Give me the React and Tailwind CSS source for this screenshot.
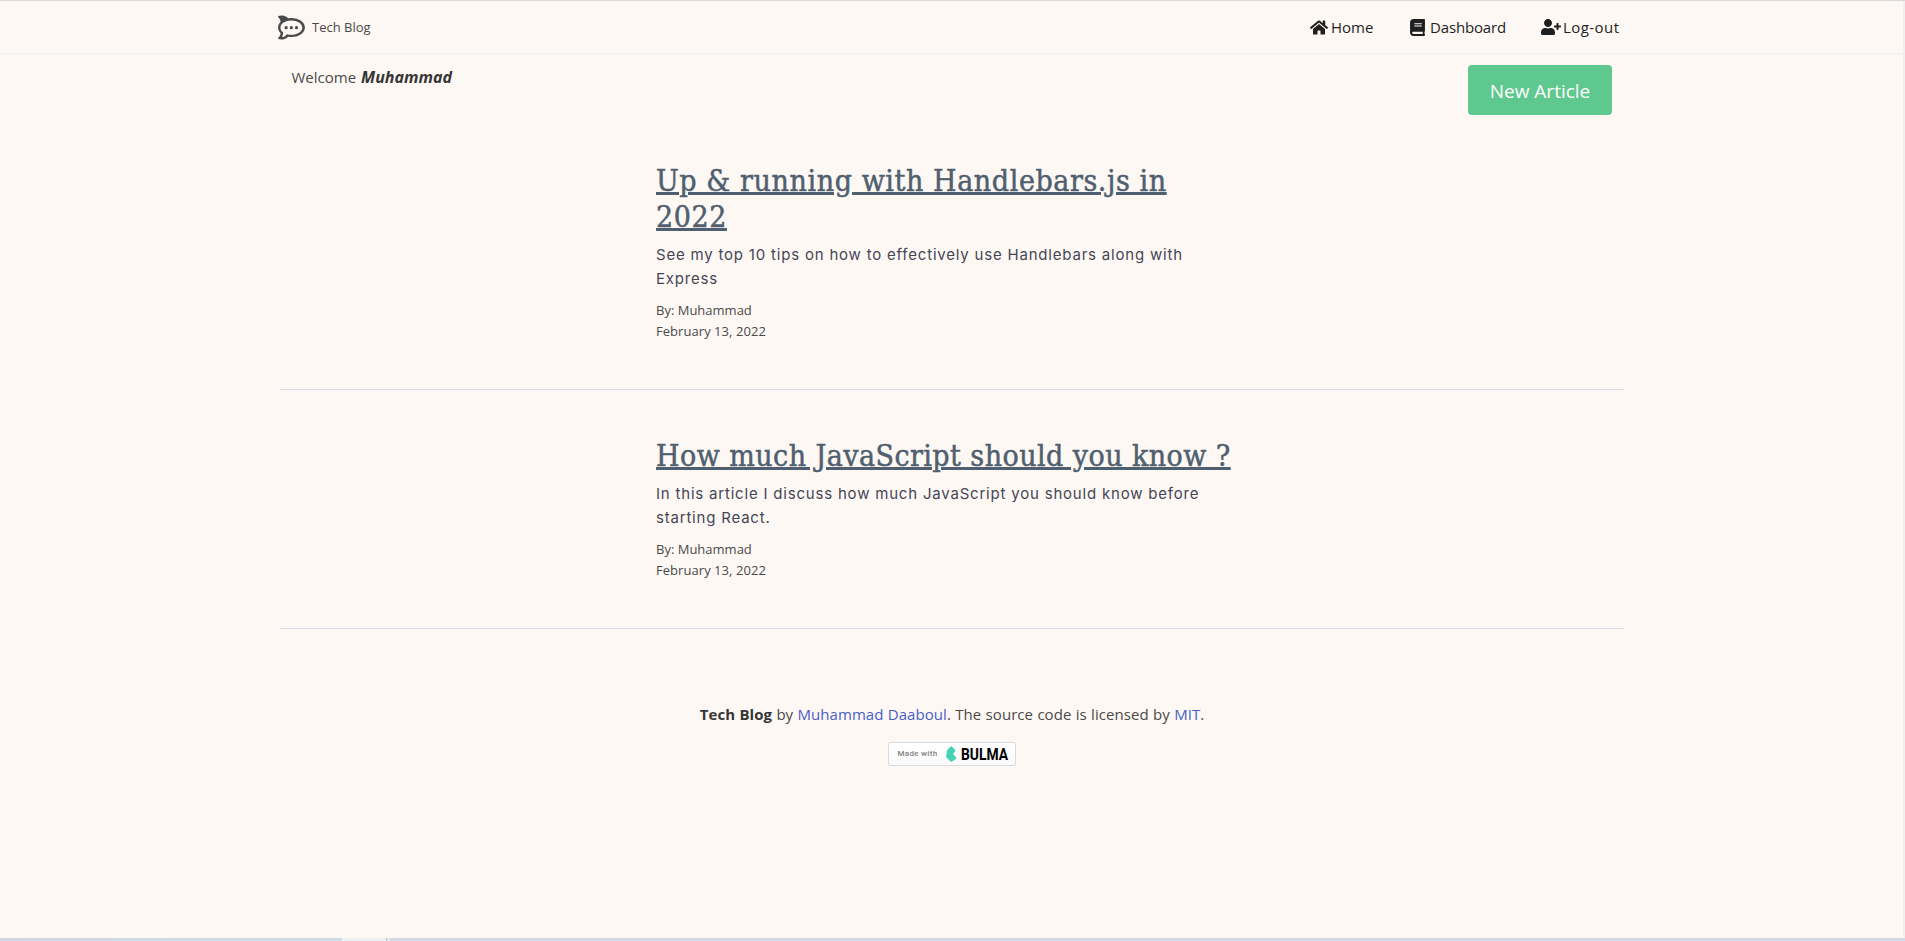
import React from "react";
import { FaRocketchat, FaHome, FaBook, FaUserPlus } from "react-icons/fa";

const articles = [
  {
    title: ["Up & running with Handlebars.js in", "2022"],
    titleClass: "tracking-[0.58px]",
    summary: ["See my top 10 tips on how to effectively use Handlebars along with", "Express"],
    author: "Muhammad",
    date: "February 13, 2022",
  },
  {
    title: ["How much JavaScript should you know ?"],
    titleClass: "tracking-[0.44px]",
    summary: ["In this article I discuss how much JavaScript you should know before", "starting React."],
    author: "Muhammad",
    date: "February 13, 2022",
  },
];

function Navbar() {
  return (
    <nav className="flex h-[54px] shrink-0 justify-between border-b-2 border-[#f5f5f5] pr-[282px] pl-[278px]">
      <a className="flex items-center text-[13px] text-[#4a4a4a]">
        <FaRocketchat className="mr-[7px] size-[27px]" />
        <span className="mt-[2px]">Tech Blog</span>
      </a>
      <div className="flex items-center text-[15px] text-[#1f1f1f]">
        <a className="flex w-[100px] items-center">
          <FaHome className="mr-[3px] h-[17px] w-[18px]" />
          <span>Home</span>
        </a>
        <a className="flex w-[131px] items-center">
          <FaBook className="mr-[5px] h-[17px] w-[15px]" />
          <span className="tracking-[-0.15px]">Dashboard</span>
        </a>
        <a className="flex w-[80px] items-center">
          <FaUserPlus className="mr-[2px] h-[16px] w-[20px]" />
          <span className="tracking-[0.45px]">Log-out</span>
        </a>
      </div>
    </nav>
  );
}

function Article({ title, titleClass, summary, author, date }) {
  return (
    <article className="border-b border-[#d6daea] pt-12 pb-[47px] pl-[376px]">
      <h2
        className={
          "font-['DejaVu_Serif_Condensed','DejaVu_Serif',serif] text-[30px] leading-[36px] font-normal text-[#4f5f6f] [font-stretch:condensed] [-webkit-text-stroke:0.5px_#4f5f6f] " +
          titleClass
        }
      >
        {title.map((line) => (
          <span key={line} className="block underline decoration-[3px] underline-offset-[1px]">
            {line}
          </span>
        ))}
      </h2>
      <p className="mt-2 font-['Inter',sans-serif] text-[15px] leading-6 tracking-[0.8px] text-[#454654]">
        {summary.map((line) => (
          <span key={line} className="block whitespace-nowrap">
            {line}
          </span>
        ))}
      </p>
      <div className="mt-[9px] text-[13px] leading-[21px] text-[#4a4a4a]">
        <p>By: {author}</p>
        <p className="tracking-[0.05px]">{date}</p>
      </div>
    </article>
  );
}

function BulmaBadge() {
  return (
    <a className="flex h-6 w-32 items-center rounded-[2px] border border-[#dbdbdb] bg-linear-to-b from-white to-[#fafafa] pl-[9px]">
      <span className="w-[48px] font-['Roboto',sans-serif] text-[8px] leading-none font-medium tracking-[0.3px] whitespace-nowrap text-[#808080]">
        Made with
      </span>
      <svg viewBox="0 0 10 16" className="h-4 w-[10px] shrink-0" fill="#44d3b5">
        <path d="M0 11 1 4.5 5 0 9 3.5 9 5.5 7 8 10 11 10 13 5 16Z" />
      </svg>
      <svg viewBox="0 0 47 16" className="ml-[5px] h-4 w-[47px] shrink-0 overflow-visible">
        <text
          x="0"
          y="13.7"
          textLength="47"
          lengthAdjust="spacingAndGlyphs"
          className="fill-black font-['Roboto',sans-serif] text-[16px] font-bold"
        >
          BULMA
        </text>
      </svg>
    </a>
  );
}

export default function App() {
  return (
    <div className="flex h-[941px] w-full flex-col overflow-hidden bg-[#fef8f4] font-['Open_Sans',sans-serif]">
      <div className="h-px shrink-0 bg-[#d8dadc]" />
      <div className="flex min-h-0 grow flex-col border-r-2 border-[#f0f0f1]">
        <Navbar />
        <main className="flex flex-col pr-[279px] pl-[280px]">
          <div className="flex h-[60px] items-start justify-between pt-[10px] pr-3 pl-[11.5px]">
            <p className="flex items-baseline gap-[5px] text-[15px] leading-6 text-[#4a4a4a]">
              Welcome
              <strong className="text-[16px] font-bold text-[#363636] italic">Muhammad</strong>
            </p>
            <button className="h-[50px] w-36 rounded bg-[#5fc88e] pt-[3px] text-[19px] text-white">New Article</button>
          </div>
          {articles.map((article) => (
            <Article key={article.title[0]} {...article} />
          ))}
        </main>
        <footer className="flex flex-col items-center pt-[73px]">
          <p className="pl-px text-[15px] leading-6 tracking-[0.05px] text-[#4a4a4a] [word-spacing:0.4px]">
            <strong className="font-bold text-[#363636]">Tech Blog</strong> by{" "}
            <a className="text-[#485fc7]">Muhammad Daaboul</a>. The source code is licensed by{" "}
            <a className="text-[#485fc7]">MIT</a>.
          </p>
          <div className="mt-4">
            <BulmaBadge />
          </div>
        </footer>
      </div>
      <div className="flex h-[3px] shrink-0 bg-[#d0d9e5]">
        <div className="w-[342px] bg-linear-to-r from-[#d0d5e4] via-[#cddbe5] to-[#cddbe4]" />
        <div className="w-11 bg-[#edf1f4]" />
        <div className="w-px bg-[#b5bcc2]" />
        <div className="w-[3px] bg-[#e3e9ee]" />
      </div>
    </div>
  );
}
